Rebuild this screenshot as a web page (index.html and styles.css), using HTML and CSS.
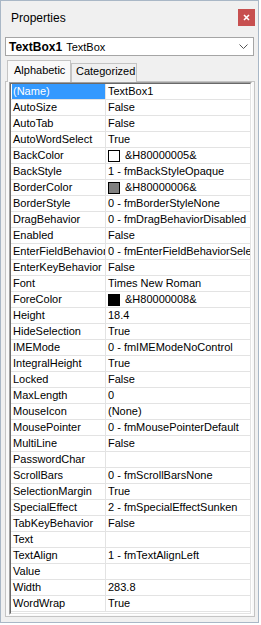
FILE: index.html
```html
<!DOCTYPE html>
<html lang="en">
<head>
    <meta charset="UTF-8">
    <title>Properties</title>
    <link rel="stylesheet" href="styles.css">
</head>
<body>
    <div class="window">
        <div class="titlebar">
            <span class="title">Properties</span>
            <div class="close">
                <svg width="7" height="7" viewBox="0 0 7 7"><path d="M1 1 L6 6 M6 1 L1 6" stroke="#fff" stroke-width="1.6"/></svg>
            </div>
        </div>

        <div class="combo">
            <span class="obj-name">TextBox1</span>
            <span class="obj-type">TextBox</span>
            <svg class="chevron" width="9" height="5" viewBox="0 0 9 5"><path d="M0.5 0.5 L4.5 4.5 L8.5 0.5" fill="none" stroke="#555" stroke-width="1"/></svg>
        </div>

        <div class="tabs">
            <div class="tab active">Alphabetic</div>
            <div class="tab">Categorized</div>
        </div>

        <div class="tabpage">
            <div class="grid-outer">
                <div class="grid">
                    <div class="row"><div class="name selected">(Name)</div><div class="value">TextBox1</div></div>
                    <div class="row"><div class="name">AutoSize</div><div class="value">False</div></div>
                    <div class="row"><div class="name">AutoTab</div><div class="value">False</div></div>
                    <div class="row"><div class="name">AutoWordSelect</div><div class="value">True</div></div>
                    <div class="row"><div class="name">BackColor</div><div class="value"><span class="swatch swatch-white"></span>&amp;H80000005&amp;</div></div>
                    <div class="row"><div class="name">BackStyle</div><div class="value">1 - fmBackStyleOpaque</div></div>
                    <div class="row"><div class="name">BorderColor</div><div class="value"><span class="swatch swatch-gray"></span>&amp;H80000006&amp;</div></div>
                    <div class="row"><div class="name">BorderStyle</div><div class="value">0 - fmBorderStyleNone</div></div>
                    <div class="row"><div class="name">DragBehavior</div><div class="value">0 - fmDragBehaviorDisabled</div></div>
                    <div class="row"><div class="name">Enabled</div><div class="value">False</div></div>
                    <div class="row"><div class="name">EnterFieldBehavior</div><div class="value">0 - fmEnterFieldBehaviorSelectAll</div></div>
                    <div class="row"><div class="name">EnterKeyBehavior</div><div class="value">False</div></div>
                    <div class="row"><div class="name">Font</div><div class="value">Times New Roman</div></div>
                    <div class="row"><div class="name">ForeColor</div><div class="value"><span class="swatch swatch-black"></span>&amp;H80000008&amp;</div></div>
                    <div class="row"><div class="name">Height</div><div class="value">18.4</div></div>
                    <div class="row"><div class="name">HideSelection</div><div class="value">True</div></div>
                    <div class="row"><div class="name">IMEMode</div><div class="value">0 - fmIMEModeNoControl</div></div>
                    <div class="row"><div class="name">IntegralHeight</div><div class="value">True</div></div>
                    <div class="row"><div class="name">Locked</div><div class="value">False</div></div>
                    <div class="row"><div class="name">MaxLength</div><div class="value">0</div></div>
                    <div class="row"><div class="name">MouseIcon</div><div class="value">(None)</div></div>
                    <div class="row"><div class="name">MousePointer</div><div class="value">0 - fmMousePointerDefault</div></div>
                    <div class="row"><div class="name">MultiLine</div><div class="value">False</div></div>
                    <div class="row"><div class="name">PasswordChar</div><div class="value"></div></div>
                    <div class="row"><div class="name">ScrollBars</div><div class="value">0 - fmScrollBarsNone</div></div>
                    <div class="row"><div class="name">SelectionMargin</div><div class="value">True</div></div>
                    <div class="row"><div class="name">SpecialEffect</div><div class="value">2 - fmSpecialEffectSunken</div></div>
                    <div class="row"><div class="name">TabKeyBehavior</div><div class="value">False</div></div>
                    <div class="row"><div class="name">Text</div><div class="value"></div></div>
                    <div class="row"><div class="name">TextAlign</div><div class="value">1 - fmTextAlignLeft</div></div>
                    <div class="row"><div class="name">Value</div><div class="value"></div></div>
                    <div class="row"><div class="name">Width</div><div class="value">283.8</div></div>
                    <div class="row"><div class="name">WordWrap</div><div class="value">True</div></div>
                </div>
            </div>
        </div>
    </div>
</body>
</html>
```

FILE: styles.css
```css
body {
    margin: 0;
    padding: 0;
    background-color: #ffffff;
    font-family: "Liberation Sans", Arial, sans-serif;
    font-size: 11px;
    color: #000;
}

.window {
    box-sizing: border-box;
    width: 259px;
    height: 623px;
    border: 1px solid #a9b7c6;
    background-color: #f0f0f0;
    display: flex;
    flex-direction: column;
}

.titlebar {
    height: 36px;
    display: flex;
    justify-content: space-between;
    align-items: flex-start;
}

.title {
    font-size: 12px;
    line-height: 16px;
    padding: 9px 0 0 10px;
}

.close {
    width: 17px;
    height: 17px;
    margin: 8px 3px 0 0;
    background-color: #c75050;
    display: flex;
    align-items: center;
    justify-content: center;
}

.combo {
    box-sizing: border-box;
    height: 19px;
    margin: 0 4px 0 4px;
    border: 1px solid #a5a5a5;
    background-color: #fff;
    display: flex;
    align-items: center;
    padding-left: 3px;
    font-size: 12px;
}

.obj-name {
    font-weight: bold;
    margin-right: 4px;
}

.obj-type {
    font-size: 11px;
    flex: 1;
}

.chevron {
    margin-right: 5px;
}

.tabs {
    display: flex;
    align-items: flex-end;
    height: 26px;
    padding-left: 6px;
    margin-bottom: -1px;
    position: relative;
}

.tab {
    box-sizing: border-box;
    height: 19px;
    width: 66px;
    border: 1px solid #c4c4c4;
    border-bottom: none;
    background-color: #f0f0f0;
    padding: 0 0 0 4px;
    line-height: 14px;
}

.tab.active {
    height: 22px;
    width: 64px;
    border-color: #c4c4c4;
    background-color: #f9f9f9;
    padding-top: 2px;
    padding-left: 6px;
}

.tabpage {
    box-sizing: border-box;
    flex: 1;
    margin: 0 3px 5px 4px;
    border: 1px solid #c4c4c4;
    background-color: #f9f9f9;
    padding: 0 2px 1px 3px;
}

.grid-outer {
    box-sizing: border-box;
    height: 100%;
    border: 1px solid;
    border-color: #a0a0a0 #ffffff #ffffff #a0a0a0;
}

.grid {
    box-sizing: border-box;
    height: 100%;
    border: 1px solid;
    border-color: #696969 #e3e3e3 #e3e3e3 #696969;
    background-color: #fff;
    overflow: hidden;
}

.row {
    display: grid;
    grid-template-columns: 95px 1fr;
    height: 16px;
    box-sizing: border-box;
    border-bottom: 1px solid #e3e3e3;
}

.name, .value {
    white-space: nowrap;
    overflow: hidden;
    line-height: 15px;
}

.name {
    padding-left: 2px;
    border-right: 1px solid #e3e3e3;
}

.name.selected {
    background-color: #3399ff;
    color: #fff;
    margin-left: 1px;
    padding-left: 1px;
}

.value {
    padding-left: 2px;
    display: flex;
    align-items: center;
}

.swatch {
    box-sizing: border-box;
    width: 12px;
    height: 12px;
    border: 1px solid #000;
    margin-right: 5px;
    flex-shrink: 0;
}

.swatch-white {
    background-color: #fff;
}

.swatch-gray {
    background-color: #808080;
}

.swatch-black {
    background-color: #000;
}
```
